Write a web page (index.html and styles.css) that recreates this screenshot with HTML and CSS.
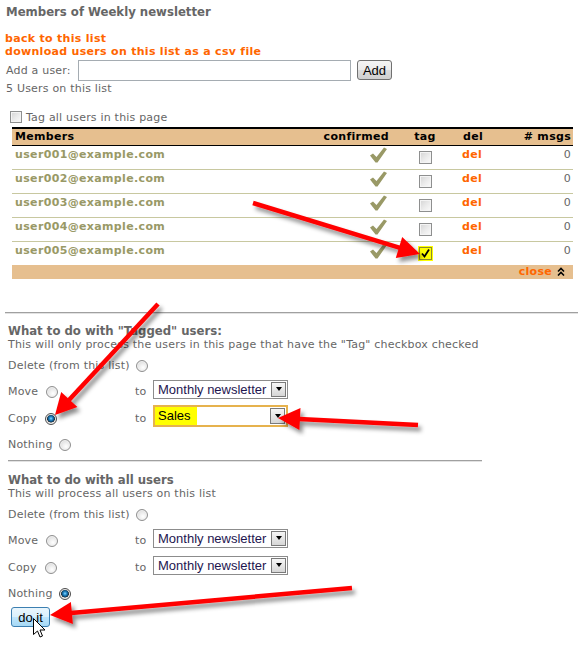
FILE: index.html
```html
<!DOCTYPE html>
<html>
<head>
<meta charset="utf-8">
<title>Members of Weekly newsletter</title>
<link rel="stylesheet" href="styles.css">
</head>
<body>
<div class="page">
  <h1 class="title">Members of Weekly newsletter</h1>
  <div class="links">
    <a class="link" href="#">back to this list</a>
    <a class="link" href="#">download users on this list as a csv file</a>
  </div>
  <form class="add-row">
    <label class="add-label">Add a user:</label>
    <input class="add-input" type="text">
    <button class="btn" type="button">Add</button>
  </form>
  <div class="count">5 Users on this list</div>
  <div class="tagall"><span class="cb"></span><span>Tag all users in this page</span></div>

  <table class="members">
    <colgroup>
      <col class="w-mem"><col class="w-conf"><col class="w-tag"><col class="w-del"><col class="w-msgs">
    </colgroup>
    <thead>
      <tr><th class="c-mem">Members</th><th class="c-conf">confirmed</th><th class="c-tag">tag</th><th class="c-del">del</th><th class="c-msgs"># msgs</th></tr>
    </thead>
    <tbody>
      <tr><td class="c-mem email">user001@example.com</td><td class="c-conf"><svg class="ok" viewBox="0 0 17 16"><path d="M0 8.5 L3 6.5 L6.5 10 L14 0.5 L17 2 L7.5 15.5 L5.5 15.5 Z"/></svg></td><td class="c-tag"><span class="cb"></span></td><td class="c-del"><a class="del" href="#">del</a></td><td class="c-msgs">0</td></tr>
      <tr><td class="c-mem email">user002@example.com</td><td class="c-conf"><svg class="ok" viewBox="0 0 17 16"><path d="M0 8.5 L3 6.5 L6.5 10 L14 0.5 L17 2 L7.5 15.5 L5.5 15.5 Z"/></svg></td><td class="c-tag"><span class="cb"></span></td><td class="c-del"><a class="del" href="#">del</a></td><td class="c-msgs">0</td></tr>
      <tr><td class="c-mem email">user003@example.com</td><td class="c-conf"><svg class="ok" viewBox="0 0 17 16"><path d="M0 8.5 L3 6.5 L6.5 10 L14 0.5 L17 2 L7.5 15.5 L5.5 15.5 Z"/></svg></td><td class="c-tag"><span class="cb"></span></td><td class="c-del"><a class="del" href="#">del</a></td><td class="c-msgs">0</td></tr>
      <tr><td class="c-mem email">user004@example.com</td><td class="c-conf"><svg class="ok" viewBox="0 0 17 16"><path d="M0 8.5 L3 6.5 L6.5 10 L14 0.5 L17 2 L7.5 15.5 L5.5 15.5 Z"/></svg></td><td class="c-tag"><span class="cb"></span></td><td class="c-del"><a class="del" href="#">del</a></td><td class="c-msgs">0</td></tr>
      <tr class="last"><td class="c-mem email">user005@example.com</td><td class="c-conf"><svg class="ok" viewBox="0 0 17 16"><path d="M0 8.5 L3 6.5 L6.5 10 L14 0.5 L17 2 L7.5 15.5 L5.5 15.5 Z"/></svg></td><td class="c-tag"><span class="cb checked"><svg viewBox="0 0 11 11"><path d="M2 5.5 L4.5 8.5 L9 1.5" /></svg></span></td><td class="c-del"><a class="del" href="#">del</a></td><td class="c-msgs">0</td></tr>
    </tbody>
    <tfoot>
      <tr><td colspan="5" class="foot"><a class="close" href="#">close</a><svg class="chev" viewBox="0 0 8 9"><path d="M1 4.5 L4 1.5 L7 4.5 M1 8.5 L4 5.5 L7 8.5"/></svg></td></tr>
    </tfoot>
  </table>

  <hr class="rule rule-full">

  <section class="sec sec1">
    <h2 class="sec-title">What to do with "Tagged" users:</h2>
    <p class="sec-sub">This will only process the users in this page that have the "Tag" checkbox checked</p>
    <div class="opt"><span>Delete (from this list)</span><input class="radio" type="radio" name="t"></div>
    <div class="opt opt-sel"><span class="opt-label"><span>Move</span><input class="radio" type="radio" name="t"></span><span class="to">to</span><span class="select"><span class="sel-text">Monthly newsletter</span><span class="sel-btn"></span></span></div>
    <div class="opt opt-sel"><span class="opt-label"><span>Copy</span><input class="radio" type="radio" name="t" checked></span><span class="to">to</span><span class="select focus"><span class="sel-text"><span class="hl">Sales</span></span><span class="sel-btn"></span></span></div>
    <div class="opt"><span>Nothing</span><input class="radio" type="radio" name="t"></div>
  </section>

  <hr class="rule rule-short">

  <section class="sec sec2">
    <h2 class="sec-title">What to do with all users</h2>
    <p class="sec-sub">This will process all users on this list</p>
    <div class="opt"><span>Delete (from this list)</span><input class="radio" type="radio" name="a"></div>
    <div class="opt opt-sel"><span class="opt-label"><span>Move</span><input class="radio" type="radio" name="a"></span><span class="to">to</span><span class="select"><span class="sel-text">Monthly newsletter</span><span class="sel-btn"></span></span></div>
    <div class="opt opt-sel"><span class="opt-label"><span>Copy</span><input class="radio" type="radio" name="a"></span><span class="to">to</span><span class="select"><span class="sel-text">Monthly newsletter</span><span class="sel-btn"></span></span></div>
    <div class="opt"><span>Nothing</span><input class="radio" type="radio" name="a" checked></div>
    <button class="doit" type="button">do it</button>
  </section>

  <svg class="overlay" width="578" height="645" viewBox="0 0 578 645">
    <defs>
      <filter id="sh" x="-30%" y="-30%" width="160%" height="160%">
        <feDropShadow dx="3" dy="4" stdDeviation="2" flood-color="#000" flood-opacity="0.45"/>
      </filter>
    </defs>
    <g class="arrow" filter="url(#sh)">
      <line x1="253" y1="203" x2="400" y2="247.8"/>
      <polygon points="420,254 395.8,258.1 402.2,237.1"/>
    </g>
    <g class="arrow" filter="url(#sh)">
      <line x1="158" y1="304" x2="69" y2="400"/>
      <polygon points="55,415 77.4,407.1 61.2,392.1"/>
    </g>
    <g class="arrow" filter="url(#sh)">
      <line x1="418" y1="425" x2="299" y2="419"/>
      <polygon points="278,418 300.5,408.1 299.4,430.1"/>
    </g>
    <g class="arrow" filter="url(#sh)">
      <line x1="352" y1="588" x2="71" y2="613"/>
      <polygon points="50,615 70.9,602.1 72.9,624"/>
    </g>
    <path class="cursor" d="M33.5 618.5 L33.5 634.5 L37.5 631 L40 637 L42.5 636 L40 630 L45 630 Z"/>
  </svg>
</div>
</body>
</html>
```

FILE: styles.css
```css
* { box-sizing: border-box; }

html, body {
  margin: 0;
  padding: 0;
  background: #fff;
}

body {
  font-family: "DejaVu Sans", Verdana, sans-serif;
  font-size: 11px;
  letter-spacing: 0.2px;
  color: #666;
}

.page {
  position: relative;
  width: 578px;
  height: 645px;
  overflow: hidden;
  padding-left: 5px;
}

.title {
  margin: 4px 0 0 1px;
  font-family: "DejaVu Sans Condensed", "DejaVu Sans", sans-serif;
  font-stretch: condensed;
  font-size: 13px;
  line-height: 16px;
  letter-spacing: 0;
  font-weight: bold;
  color: #666;
}

.links {
  margin-top: 12px;
}

.link {
  display: block;
  font-weight: bold;
  letter-spacing: 0.3px;
  color: #ff6600;
  text-decoration: none;
  line-height: 13px;
}

.add-row {
  display: flex;
  align-items: center;
  height: 24px;
  margin: 0;
}

.add-label {
  width: 73px;
  padding-left: 1px;
}

.add-input {
  width: 273px;
  height: 21px;
  border: 1px solid #a5acb2;
  margin: 0;
}

.btn {
  margin-left: 6px;
  width: 35px;
  height: 20px;
  padding: 0;
  border: 1px solid #707070;
  border-radius: 3px;
  background: linear-gradient(#f4f4f4, #ebebeb 50%, #dcdcdc 50%, #cfcfcf);
  font-family: "Liberation Sans", Arial, sans-serif;
  font-size: 13px;
  letter-spacing: 0;
  color: #000;
}

.count {
  line-height: 14px;
  padding-left: 1px;
}

.tagall {
  margin-top: 14px;
  height: 14px;
  display: flex;
  align-items: center;
  gap: 4px;
  padding-left: 5px;
}

.cb {
  display: inline-block;
  width: 13px;
  height: 13px;
  border: 1px solid #8e8f8f;
  background: linear-gradient(135deg, #d4d4d4 0%, #ececec 55%, #fafafa 100%);
  box-shadow: inset 0 0 0 1px #f4f4f4;
  vertical-align: top;
}

.tagall .cb {
  width: 12px;
  height: 12px;
}

.cb.checked {
  background: #ffff00;
  border-color: #8a8a30;
  box-shadow: 0 0 0 1px #ffff00;
}

.cb.checked svg {
  display: block;
  width: 11px;
  height: 11px;
  fill: none;
  stroke: #000;
  stroke-width: 1.8;
}

/* members table */
.members {
  margin: 3px 0 0 7px;
  width: 561px;
  table-layout: fixed;
  border-collapse: separate;
  border-spacing: 0;
}

.w-mem { width: 288px; }
.w-conf { width: 95px; }
.w-tag { width: 60px; }
.w-del { width: 36px; }
.w-msgs { width: 82px; }

.members th {
  background: #e6bf8f;
  border-top: 2px solid #000;
  border-bottom: 1px solid #000;
  height: 19px;
  padding: 0;
  line-height: 16px;
  font-weight: bold;
  letter-spacing: 0.3px;
  color: #000;
  font-size: 11px;
}

.members td {
  height: 24px;
  padding: 2px 0 0 0;
  line-height: 14px;
  vertical-align: top;
  border-bottom: 1px solid #c8c8a0;
}

.members tr.last td {
  height: 23px;
  border-bottom: 0;
}

.c-mem { text-align: left; padding-left: 3px !important; }
.c-conf { text-align: right; padding-right: 6px !important; }
.c-tag { text-align: center; }
.c-del { text-align: center; }
.c-msgs { text-align: right; padding-right: 2px !important; }

.email {
  font-weight: bold;
  letter-spacing: 0.35px;
  color: #999966;
}

.ok {
  display: inline-block;
  width: 17px;
  height: 16px;
  margin: -1px 2px 0 0;
  fill: #999966;
}

.c-tag .cb {
  margin-top: 3px;
}

.del {
  font-weight: bold;
  letter-spacing: 0.3px;
  color: #ff6600;
  text-decoration: none;
  margin-right: 2px;
}

.members td.foot {
  background: #e6bf8f;
  height: 14px;
  padding: 0 8px 0 0;
  line-height: 14px;
  text-align: right;
  border: 0;
}

.close {
  font-weight: bold;
  letter-spacing: 0.3px;
  color: #ff6600;
  text-decoration: none;
}

.chev {
  display: inline-block;
  width: 8px;
  height: 9px;
  margin-left: 5px;
  vertical-align: -1px;
  fill: none;
  stroke: #000;
  stroke-width: 1.6;
}

/* rules */
.rule {
  border: 0;
  height: 2px;
  border-top: 1px solid #a0a0a0;
  border-bottom: 1px solid #e2e2e2;
  margin: 0;
}

.rule-full {
  margin-top: 33px;
  width: 573px;
}

.rule-short {
  margin: 3px 0 0 3px;
  width: 474px;
}

/* sections */
.sec {
  padding-left: 3px;
}

.sec-title {
  margin: 9px 0 0 0;
  font-family: "DejaVu Sans Condensed", "DejaVu Sans", sans-serif;
  font-stretch: condensed;
  font-size: 13px;
  line-height: 15px;
  letter-spacing: 0;
  font-weight: bold;
  color: #666;
}

.sec2 .sec-title {
  margin-top: 10px;
}

.sec-sub {
  margin: 0;
  line-height: 13px;
}

.opt {
  display: flex;
  align-items: center;
  height: 25px;
  gap: 6px;
}

.sec-sub + .opt {
  margin-top: 2px;
}

.opt-sel {
  height: 27px;
  gap: 0;
}

.opt-label {
  width: 127px;
  display: flex;
  align-items: center;
  gap: 8px;
}

.to {
  width: 18px;
}

.radio {
  appearance: none;
  -webkit-appearance: none;
  margin: 0;
  width: 12px;
  height: 12px;
  border-radius: 50%;
  border: 1px solid #8f8f8f;
  background: radial-gradient(circle at 60% 65%, #ffffff 0, #f2f2f2 30%, #d2d2d2 100%);
  box-shadow: inset 0 0 0 1px #f0f0f0;
}

.radio:checked {
  border-color: #4d4d4d;
  background: radial-gradient(circle at 50% 45%, #8fdcff 0, #2a8fd0 1.5px, #0c4b78 3.2px, #1a1a1a 3.8px, #d8d8d8 4.2px, #f4f4f4 100%);
}

.select {
  display: flex;
  align-items: stretch;
  width: 135px;
  height: 19px;
  border: 1px solid #8c8c8c;
  background: #fff;
  margin-bottom: 5px;
  font-family: "Liberation Sans", Arial, sans-serif;
  font-size: 13px;
  letter-spacing: 0;
  color: #1e1650;
}

.select.focus {
  height: 22px;
  border: 2px solid #e6b24e;
  color: #000;
}

.sel-text {
  flex: 1;
  padding-left: 4px;
  line-height: 17px;
  white-space: nowrap;
  overflow: hidden;
}

.select.focus .sel-text {
  padding-left: 0;
  line-height: 18px;
}

.hl {
  display: inline-block;
  background: #ffff00;
  padding: 0 6px 0 3px;
  height: 18px;
}

.sel-btn {
  width: 15px;
  margin: 1px;
  border: 1px solid #7a7a7a;
  background: linear-gradient(#f6f6f6, #d6d6d6);
  display: flex;
  align-items: center;
  justify-content: center;
}

.sel-btn::after {
  content: "";
  width: 0;
  height: 0;
  border-left: 3.5px solid transparent;
  border-right: 3.5px solid transparent;
  border-top: 4px solid #000;
}

.doit {
  display: block;
  margin: 1px 0 0 3px;
  width: 39px;
  height: 20px;
  padding: 0;
  border: 1px solid #3c7fb1;
  border-radius: 3px;
  background: linear-gradient(#eaf6fd, #d9f0fc 50%, #bee6fd 50%, #a7d9f5);
  font-family: "Liberation Sans", Arial, sans-serif;
  font-size: 13px;
  letter-spacing: 0;
  color: #000;
}

/* annotation overlay */
.overlay {
  position: absolute;
  left: 0;
  top: 0;
  pointer-events: none;
}

.arrow line {
  stroke: #ff0000;
  stroke-width: 4.5;
}

.arrow polygon {
  fill: #ff0000;
}

.cursor {
  fill: #fff;
  stroke: #000;
  stroke-width: 1;
}
```
